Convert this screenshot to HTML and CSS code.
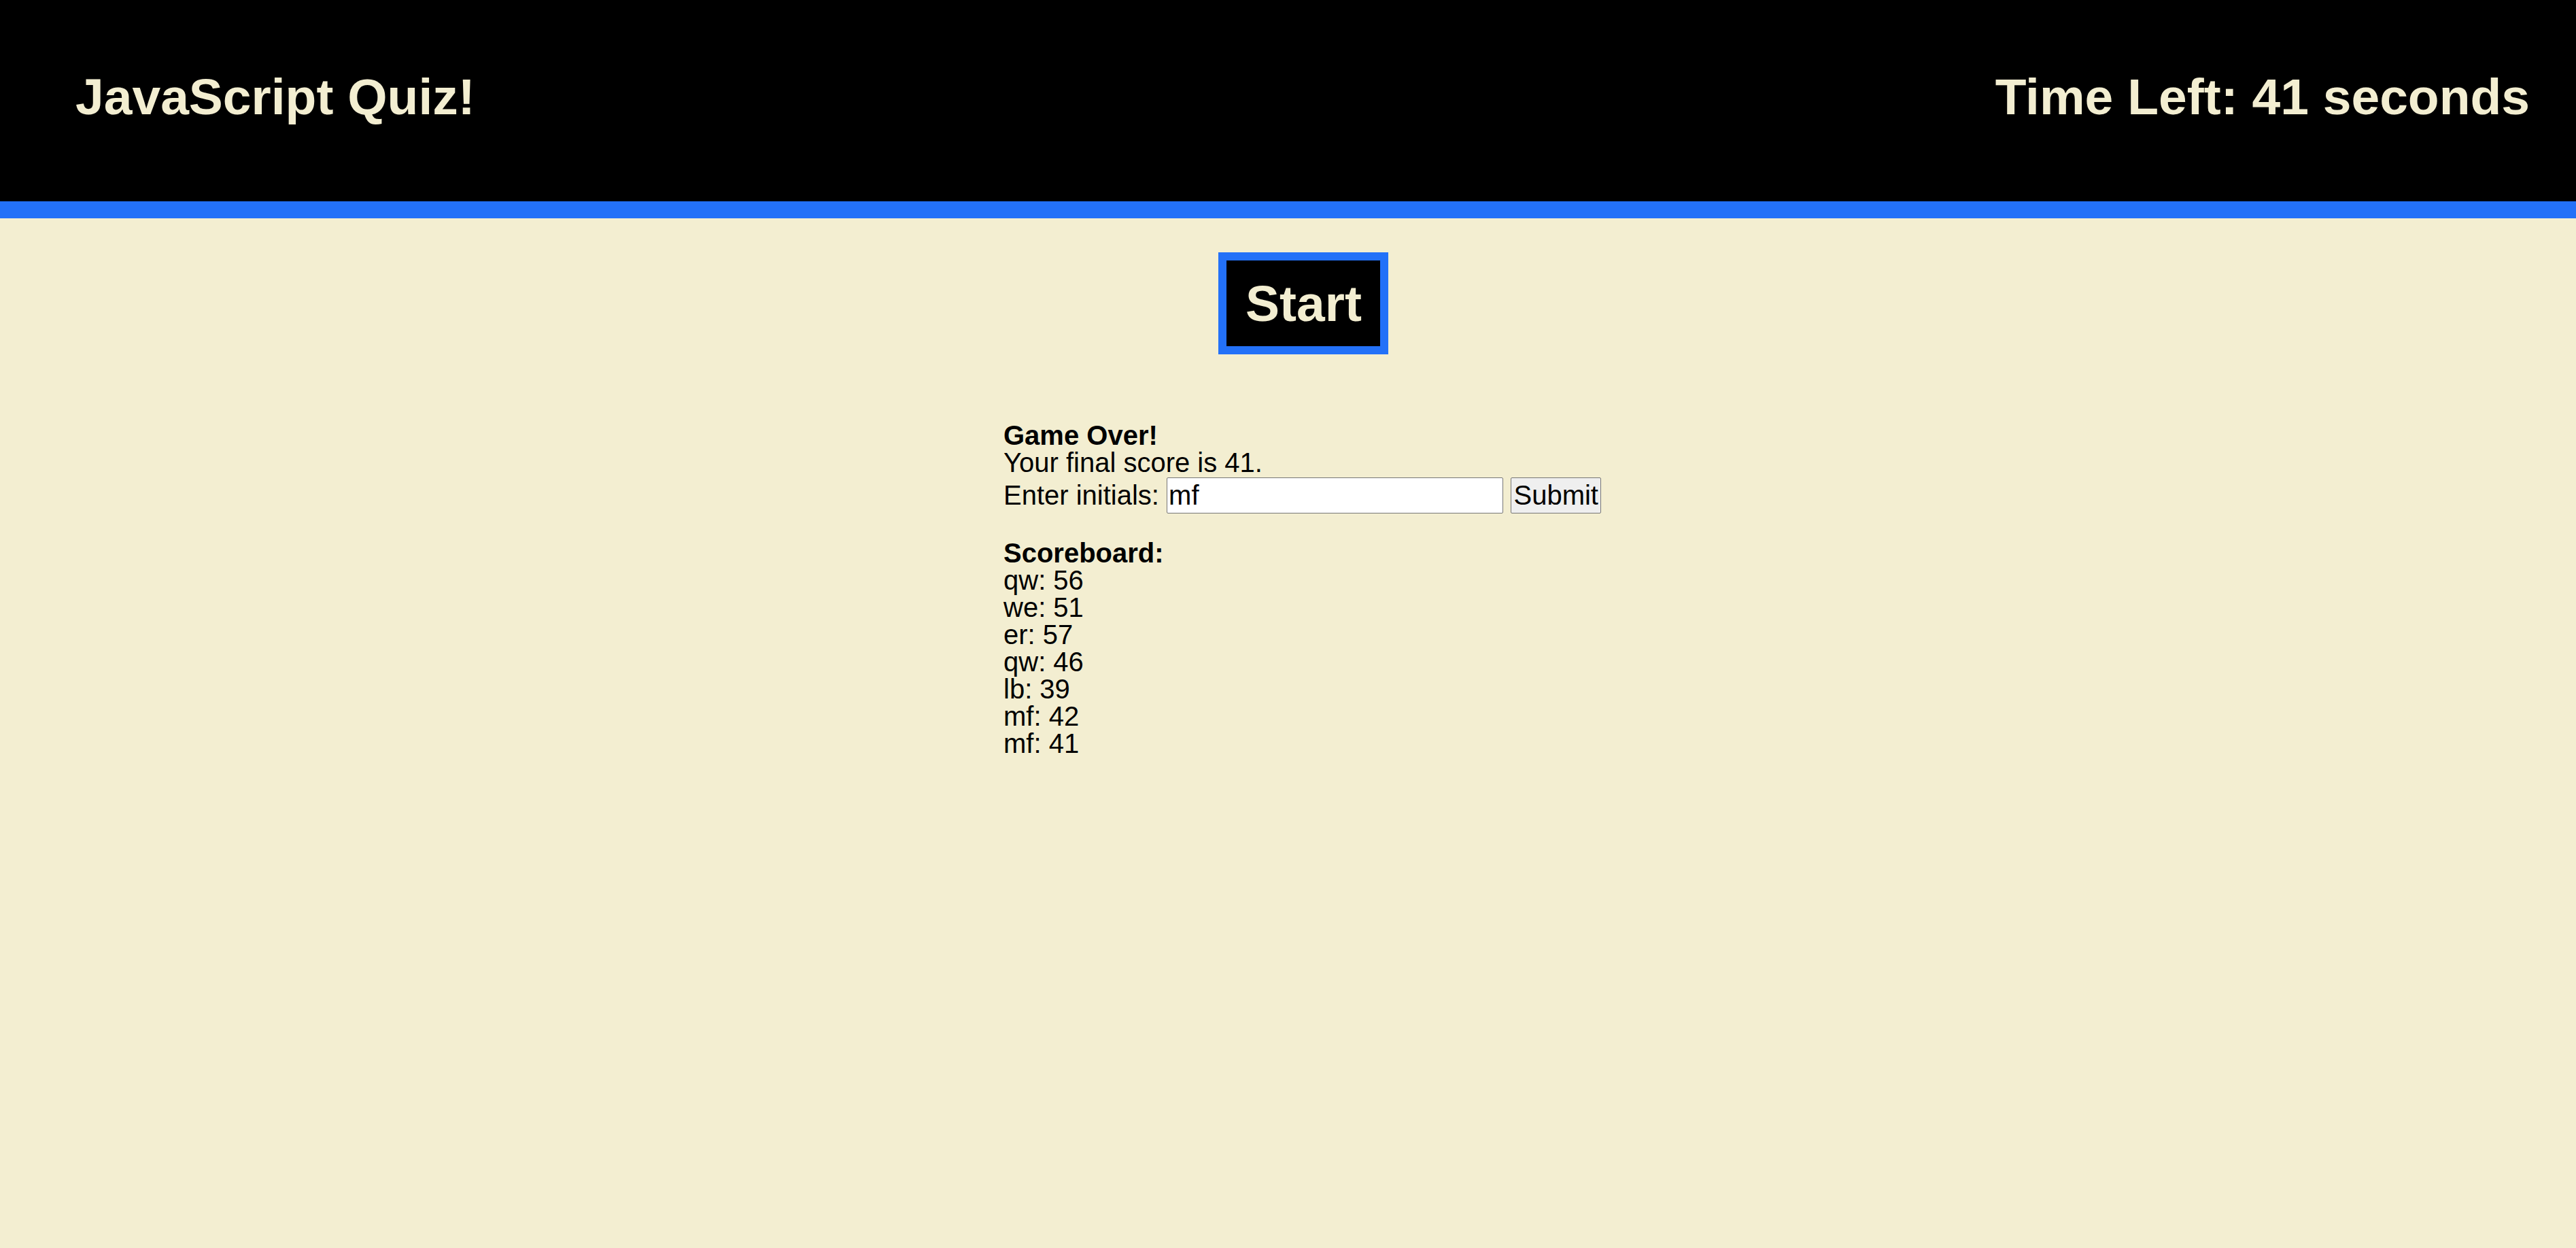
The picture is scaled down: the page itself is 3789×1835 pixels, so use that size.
FILE: index.html
```html
<!DOCTYPE html>
<html lang="en">
<head>
<meta charset="utf-8">
<title>JavaScript Quiz!</title>
<link rel="stylesheet" href="styles.css">
</head>
<body>
<header class="topbar">
  <h1 class="title">JavaScript Quiz!</h1>
  <div class="timer">Time Left: 41 seconds</div>
</header>
<main class="main">
  <div class="start-row">
    <button class="start-btn" type="button">Start</button>
  </div>
  <section class="results">
    <div class="game-over">Game Over!</div>
    <div class="final">Your final score is 41.</div>
    <form class="initials-row">
      <label for="initials">Enter initials:</label> <input id="initials" class="initials-input" type="text" value="mf"> <button class="submit-btn" type="button">Submit</button>
    </form>
    <div class="scoreboard">
      <div class="scoreboard-title">Scoreboard:</div>
      <div class="score">qw: 56</div>
      <div class="score">we: 51</div>
      <div class="score">er: 57</div>
      <div class="score">qw: 46</div>
      <div class="score">lb: 39</div>
      <div class="score">mf: 42</div>
      <div class="score">mf: 41</div>
    </div>
  </section>
</main>
</body>
</html>
```
FILE: styles.css
```css
html, body {
  margin: 0;
  padding: 0;
}

body {
  background: #f3eed1;
  font-family: "Liberation Sans", Arial, sans-serif;
  color: #000;
}

.topbar {
  background: #000;
  border-bottom: 25px solid #2371f8;
  height: 321px;
  box-sizing: border-box;
  padding: 99px 68px 0 111px;
  display: flex;
  justify-content: space-between;
  align-items: flex-start;
  color: #f3eed1;
  font-weight: bold;
  font-size: 75px;
  line-height: 86px;
}

.title {
  margin: 0;
  font-size: 75px;
  font-weight: bold;
  line-height: 86px;
}

.timer {
  line-height: 86px;
}

.main {
  display: flex;
  flex-direction: column;
}

.start-row {
  display: flex;
  justify-content: center;
  padding-top: 50px;
  padding-left: 45px;
}

.start-btn {
  background: #000;
  color: #f3eed1;
  border: 12px solid #2371f8;
  font-family: "Liberation Sans", Arial, sans-serif;
  font-weight: bold;
  font-size: 75px;
  line-height: 86px;
  padding: 20px 27px 20px 28px;
  margin: 0;
  width: 250px;
  height: 150px;
  box-sizing: border-box;
  cursor: pointer;
}

.results {
  width: 837px;
  margin: 99px auto 0;
  font-size: 40px;
  line-height: 40px;
}

.game-over {
  font-weight: bold;
}

.initials-row {
  margin: 2px 0 0;
  white-space: nowrap;
}

.initials-input {
  font-family: "Liberation Sans", Arial, sans-serif;
  font-size: 40px;
  width: 495px;
  height: 53px;
  box-sizing: border-box;
  border: 1px solid #767676;
  border-radius: 2px;
  padding: 0 2px;
  margin: 0;
  background: #fff;
  color: #000;
}

.submit-btn {
  font-family: "Liberation Sans", Arial, sans-serif;
  font-size: 40px;
  height: 53px;
  width: 133px;
  box-sizing: border-box;
  border: 1px solid #767676;
  border-radius: 2px;
  background: #efefef;
  color: #000;
  padding: 0 3px;
  margin: 0;
}

.scoreboard {
  margin-top: 38px;
}

.scoreboard-title {
  font-weight: bold;
}
```
